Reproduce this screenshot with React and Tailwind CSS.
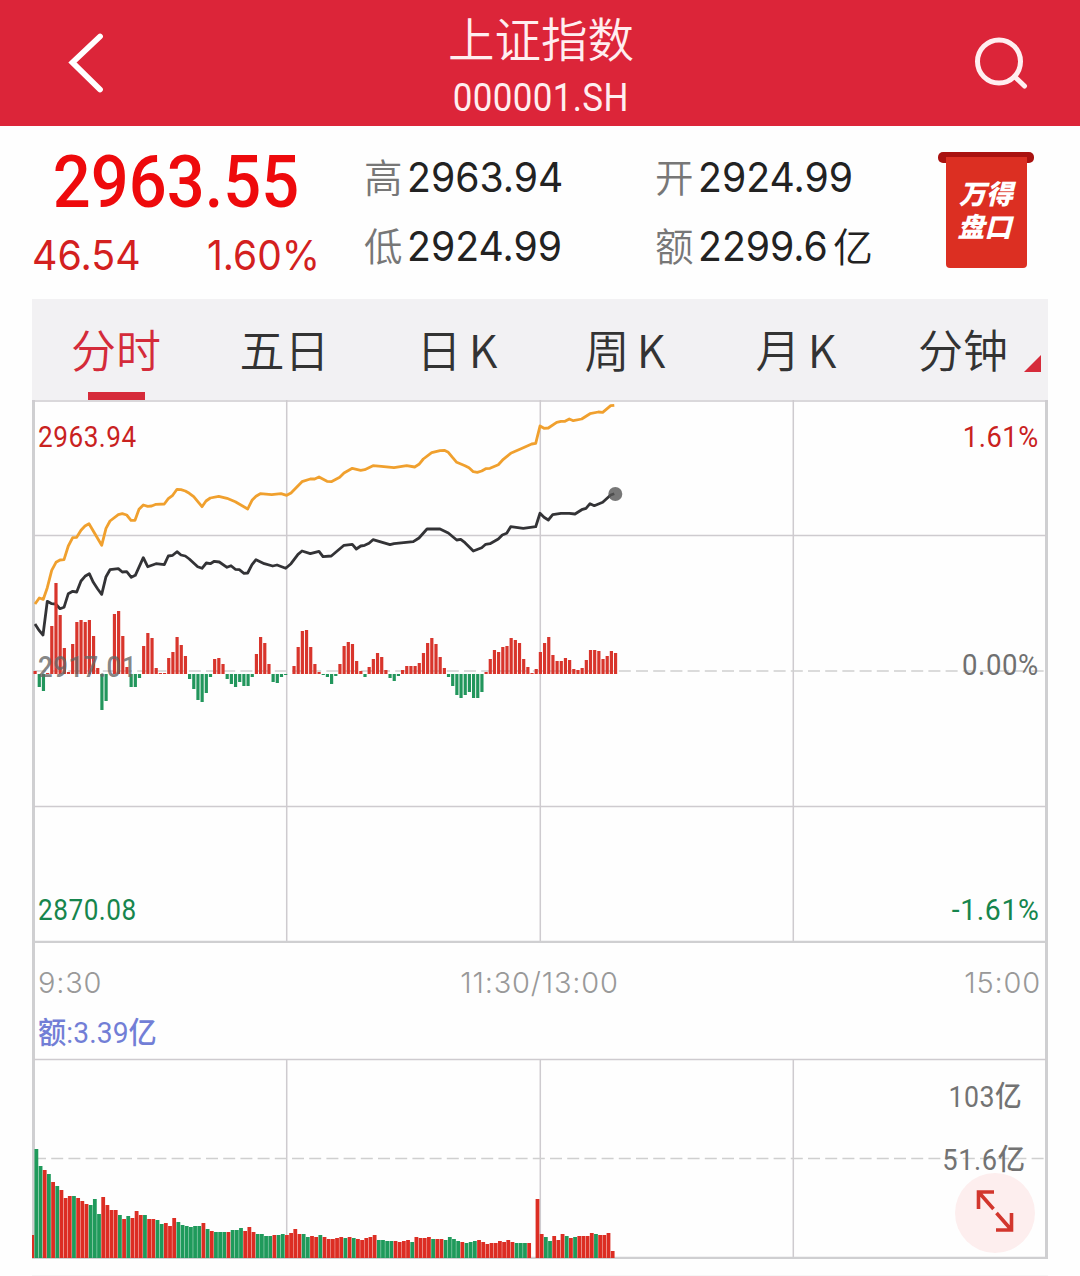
import React from 'react';

const STEP = 4.176;

// offsets from the zero line, one per minute
const momentum = [
  3, -13, -17, 1, 48, 91, 59, 26, 2, 30, 52, 54, 52, 54, 38, 6, -36, -27, 0, 60,
  63, 38, 7, -13, -13, -4, 28, 41, 36, 6, 1, 1, 16, 22, 37, 29, 18, -5, -15, -26,
  -28, -19, -3, 15, 16, 10, -5, -10, -13, -8, -12, -12, -3, 20, 37, 31, 10, -8, -9, -3,
  -1, 0, 8, 27, 43, 44, 27, 10, 2, -1, -3, -10, -2, 10, 28, 32, 30, 13, 3, -3,
  7, 15, 21, 17, 4, -4, -7, -2, 4, 8, 8, 8, 11, 21, 31, 36, 30, 17, 6, -3,
  -12, -21, -24, -21, -18, -24, -24, -18, 2, 15, 24, 22, 27, 28, 36, 34, 31, 15, 7, 1,
  5, 22, 31, 37, 19, 13, 13, 16, 14, 5, 4, 6, 14, 24, 24, 23, 15, 18, 23, 21,
];

const volume = [
  23, 109, 92, 88, 84, 76, 72, 68, 60, 62, 62, 60, 57, 54, 53, 59, 44, 61, 53, 48,
  48, 43, 39, 42, 40, 47, 43, 43, 39, 39, 38, 34, 35, 32, 40, 36, 33, 32, 31, 32,
  32, 35, 29, 27, 26, 26, 26, 26, 28, 28, 30, 27, 31, 26, 24, 24, 22, 22, 23, 23,
  24, 23, 25, 29, 24, 24, 21, 22, 21, 23, 21, 19, 19, 20, 21, 20, 21, 20, 19, 18,
  20, 21, 23, 18, 18, 17, 17, 17, 16, 17, 18, 16, 21, 20, 20, 21, 19, 19, 19, 18,
  21, 19, 17, 16, 15, 16, 17, 18, 16, 14, 15, 15, 17, 16, 18, 16, 15, 15, 15, 15,
  0, 59, 24, 21, 17, 22, 18, 24, 22, 20, 21, 22, 22, 22, 25, 24, 23, 23, 25, 7,
];

// r = rising minute, g = falling minute
const volumeSide =
  'rggrgrgrrrgrrrgggrrr' +
  'rgrgrrrgrrggrrrggggg' +
  'grgrgggrgggrrrggggrg' +
  'grrrrggrrgrrrrrgrgrr' +
  'rrrggggrrrrgrrrrgrrg' +
  'gggrgggrrrrrrrrrgggr' +
  'rrrggrrrgrgrrrrgrrrr';

const averageLine =
  '3,204 7.3,198 11.3,199.3 15.3,187.7 19.7,170.3 24,162.3 28,160 32,159.7 36.3,146 40.7,137.7 44.7,137.3 49,130.3 53,126 57,123.7 69.7,145.3 74,128.3 78,121 86.3,114.7 90.3,113.7 94.7,115 99,120.3 103,120.3 107,109.3 111.3,105 115.7,106.3 119.7,106 124,104.3 132.3,104 136.3,98.7 140.7,95.3 145,89.3 149,89.7 153.3,91 157.3,93.3 161.7,96.7 170,106.7 174,101 178.3,98 186.7,96.3 195,98.3 203.3,101.7 215.7,109 220,100.3 224,96.3 228.3,93.7 239.7,94.7 249,93.7 254.7,95.3 259,93 270,81.7 278.3,79 282.7,79 287,77 295,81.3 299.3,81.7 307.7,77.3 312,73 320.3,68.3 328.7,70.3 332.7,69.7 341,65.7 349.3,66.3 362,67.7 374.7,65.7 382.7,67 387,64.3 391.3,59 399.7,52.7 408,50.7 412.3,50.3 416.3,52.3 420.7,57.7 424.7,62.3 433,65.7 437,67.7 441.3,71.7 445.3,72.3 449.7,71 453.7,68.7 458,68.3 466.3,64.7 471.3,59.3 478.7,53.3 491.3,47.7 499.7,44 503.7,43.3 508,26 512,28.3 516.3,28 524.7,22.3 529,21.3 533,21.3 537.3,19 541.3,20.7 549.7,19 558,13.7 566.3,12 570.7,12.3 578.7,5.7 582.3,5.3';

const priceLine =
  '3,224 7.3,230.7 11,235 15.3,201.3 19.7,203.7 23.7,204 28,208.7 32,207.3 36.3,193.7 40.7,191.3 44.7,192 49,181 53,176.3 57.3,173.7 61.3,182.3 65.7,189 69.7,194.3 74,176.7 78,169.7 86.3,168.7 90.3,172 94.7,171.7 99.3,177.3 103.3,175.3 111.3,157.7 115.7,166.7 124,163.7 132.3,164.7 136.3,156 140.7,155.3 145,151.7 149,155 153.3,156 157.3,159 165.7,166.7 170,168.3 174.3,163 178.3,163.7 182.3,161.3 187.3,162 195,167.3 199,165.7 203.3,169.3 207.3,169.7 212,173.3 215.7,173 220,164.7 224,159.7 232.3,163.7 240.7,166 245,165 253.7,168.3 259,163.7 266,154.3 270,151 278.3,153.7 287,151.3 291,156.7 299.3,156 312,145.3 320.3,144.3 324.3,149 328.7,146 332.7,145.3 337,143.3 341,139.7 358,144.7 362,143.7 381.3,141.7 387,138 395,129 408,129 416.3,133 424.7,140 428.7,139.3 433,142.7 441.3,151 449.7,147.7 453.7,144.3 458,143.7 466.3,139 470.3,135 474.7,133.3 478.7,126.7 491.3,128.3 503.7,126.7 508,113.3 512,117.3 516.3,120 520.7,114.7 529,113.3 537.3,113.3 543,114 549.7,109.7 554,108.3 558,103.7 562.3,105.7 570.7,102.3 578.7,95 582.3,93.7';

const tabs = [
  { label: '分时', width: 'w-[168px]', active: true },
  { label: '五日', width: 'w-[169px]' },
  { label: '日 K', width: 'w-[176px]' },
  { label: '周 K', width: 'w-[160px]' },
  { label: '月 K', width: 'w-[182px]' },
  { label: '分钟', width: 'w-[152px]' },
];

const Header = () => (
  <header className="flex h-[126px] items-center justify-between bg-[#dc2539] pl-[68px] pr-[52px] text-[#ffeef0]">
    <svg className="h-[64px] w-[36px]" viewBox="0 0 36 64" fill="none" stroke="white" strokeWidth="5.8" strokeLinecap="round">
      <path d="M32 5.5L4.5 31.5L32 58.5" />
    </svg>
    <div className="flex flex-col items-center pl-[4px]">
      <h1 className="h-[73px] text-[46.5px] leading-[73px] font-[350]">上证指数</h1>
      <p className="h-[53px] scale-x-[0.92] font-['Roboto'] text-[38px] leading-[51px] tracking-[0.4px]">000001.SH</p>
    </div>
    <svg className="h-[54px] w-[54px]" viewBox="0 0 54 54" fill="none" stroke="currentColor" strokeWidth="5" strokeLinecap="round">
      <circle cx="25" cy="25.5" r="21.5" />
      <path d="M40.5 40.5L50.5 50" />
    </svg>
  </header>
);

const Stat = ({ label, value, unit }) => (
  <div className="flex h-[69px] items-center whitespace-nowrap text-[#222]">
    <span className="w-[43px] pb-[4px] text-[38.5px] font-[350] text-[#777]">{label}</span>
    <span className="w-[156px] origin-left scale-x-[0.955] font-['Inter'] text-[41px]">{value}</span>
    {unit && <span className="-ml-[21px] pb-[4px] text-[40px] font-[350]">{unit}</span>}
  </div>
);

const Quote = () => (
  <section className="flex h-[173px] pl-[32px]">
    <div className="w-[332px]">
      <div className="h-[101px] w-[288px] scale-x-[0.915] text-center font-['Roboto'] text-[73px] leading-[113px] font-medium text-[#ee0a0c]">
        2963.55
      </div>
      <div className="flex w-[288px] justify-between font-['Inter'] text-[41px] leading-[57px] text-[#d3201f]">
        <span className="origin-left scale-x-[0.96]">46.54</span>
        <span className="origin-right scale-x-[0.95]">1.60%</span>
      </div>
    </div>
    <div className="w-[291px] pt-[17px]">
      <Stat label="高" value="2963.94" />
      <Stat label="低" value="2924.99" />
    </div>
    <div className="w-[283px] pt-[17px]">
      <Stat label="开" value="2924.99" />
      <Stat label="额" value="2299.6" unit="亿" />
    </div>
    <div className="flex flex-col items-center pt-[26px]">
      <div className="h-[11px] w-[96px] rounded-[5px] bg-[#a91210]" />
      <div className="-mt-[6px] h-[111px] w-[81px] rounded-b-[4px] bg-[#dc2f22] pt-[19px] text-center text-[27px] leading-[33px] font-black text-white italic">
        <p>万得</p>
        <p className="-ml-[3px]">盘口</p>
      </div>
    </div>
  </section>
);

const Tabs = () => (
  <nav className="mx-[32px] flex h-[101px] bg-[#f2f1f3] text-[45px] font-[350] text-[#333]">
    {tabs.map((tab) => (
      <div key={tab.label} className={`flex shrink-0 flex-col items-center ${tab.width} ${tab.active ? 'text-[#d42b3a]' : ''}`}>
        <span className="h-[93px] leading-[99px] whitespace-nowrap [word-spacing:-3px]">{tab.label}</span>
        {tab.active && <span className="h-[8px] w-[57px] shrink-0 bg-[#d62b3a]" />}
      </div>
    ))}
    <svg className="mt-[56px] -ml-[15px] h-[17px] w-[17px] shrink-0" viewBox="0 0 17 17">
      <path d="M17 0V17H0Z" fill="#d62b3a" />
    </svg>
  </nav>
);

const PriceChart = () => (
  <div className="relative h-[543px] font-['Roboto'] text-[29px] leading-[36px] font-[450] tracking-[0.6px]">
    <svg className="block h-[543px] w-[1016px]" viewBox="0 0 1016 543" fill="none">
      <path d="M0 1H1016M2 135.5H1014M2 406.5H1014" stroke="#cecbcf" strokeWidth="1.5" />
      <path d="M254.7 0V542M508.3 0V542M761.3 0V542" stroke="#cecbcf" strokeWidth="1.5" />
      <path d="M2 271H1014" stroke="#cfcfcf" strokeWidth="1.5" strokeDasharray="12 5.2" />
      <path d="M2 542H1014" stroke="#cfcfd1" strokeWidth="2.5" />
      <polyline points={averageLine} stroke="#f0a02e" strokeWidth="2.8" strokeLinejoin="round" />
      <polyline points={priceLine} stroke="#333336" strokeWidth="2.8" strokeLinejoin="round" />
      {momentum.map((v, i) => (
        <rect
          key={i}
          x={1.5 + i * STEP}
          y={v > 0 ? 274 - v : 274}
          width="3.2"
          height={Math.abs(v)}
          fill={v > 0 ? '#d8352c' : '#22965c'}
        />
      ))}
      <circle cx="583.3" cy="94" r="7" fill="#555" fillOpacity="0.8" />
    </svg>
    <div className="absolute inset-0 flex justify-between pr-[9px] pl-[6px]">
      <div className="flex flex-col">
        <span className="mt-[19px] origin-left scale-x-[0.9] text-[#c9221f]">2963.94</span>
        <span className="mt-[194px] origin-left scale-x-[0.89] font-medium text-[#666]/80">2917.01</span>
        <span className="mt-[207px] origin-left scale-x-[0.9] text-[#16854d]">2870.08</span>
      </div>
      <div className="flex flex-col items-end">
        <span className="mt-[19px] origin-right scale-x-[0.94] text-[#c9221f]">1.61%</span>
        <span className="mt-[192px] origin-right scale-x-[0.95] font-normal text-[#707070]">0.00%</span>
        <span className="mt-[209px] origin-right scale-x-[0.98] text-[#16854d]">-1.61%</span>
      </div>
    </div>
  </div>
);

const TimeAxis = () => (
  <div className="h-[115px] pr-[7px] pl-[6px]">
    <div className="grid h-[63px] grid-cols-[1fr_auto_1fr] pt-[19px] font-['Inter'] text-[29px] leading-[42px] font-[350] tracking-[0.8px] text-[#999]">
      <span>9:30</span>
      <span>11:30/13:00</span>
      <span className="text-right">15:00</span>
    </div>
    <div className="origin-left scale-x-[0.94] font-['Roboto','Noto_Sans_CJK_SC'] text-[30px] leading-[54px] font-[450] tracking-[0.1px] text-[#727ed6]">额:3.39亿</div>
  </div>
);

const VolumeChart = () => (
  <div className="relative h-[201px] font-['Roboto','Noto_Sans_CJK_SC'] text-[29px] leading-[36px] tracking-[0.6px] text-[#737373]">
    <svg className="block h-[201px] w-[1016px]" viewBox="0 0 1016 201" fill="none">
      <path d="M2 1.5H1014M254.7 1V199M508.3 1V199M761.3 1V199" stroke="#cecbcf" strokeWidth="1.5" />
      <path d="M2 100.5H1014" stroke="#cfcfcf" strokeWidth="1.5" strokeDasharray="12 5.2" />
      <path d="M2 200H1014" stroke="#cfcfd1" strokeWidth="2.5" />
      {volume.map((v, i) => (
        <rect
          key={i}
          x={-1.7 + i * STEP}
          y={200 - v}
          width="3.8"
          height={v}
          fill={volumeSide[i] === 'r' ? '#dc2d23' : '#1f9a5b'}
        />
      ))}
    </svg>
    <div className="absolute top-0 right-[22px] flex flex-col items-end font-[450]">
      <span className="mt-[21px] mr-[4px] origin-right scale-x-[0.92]">103亿</span>
      <span className="mt-[27px] origin-right scale-x-[0.94]">51.6亿</span>
    </div>
    <button className="absolute top-[115px] right-[13px] flex h-[80px] w-[80px] items-center justify-center rounded-full bg-[#fdeeee]">
      <svg className="mb-[4px] h-[44px] w-[38px]" viewBox="0 0 38 44" fill="none" stroke="#d2362d" strokeWidth="3.6">
        <path d="M2.5 20V3H18M3 3.5L17.5 20" />
        <path d="M35.5 24V41H20M35 40.5L20.5 24" />
      </svg>
    </button>
  </div>
);

export default function App() {
  return (
    <div className="h-[1276px] w-[1080px] overflow-hidden bg-[#fefefe] font-['Noto_Sans_CJK_SC',sans-serif]">
      <Header />
      <Quote />
      <Tabs />
      <main className="mx-[32px] h-[859px] shadow-[inset_3px_0_0_#cfcfd1,inset_-3px_0_0_#cfcfd1]">
        <PriceChart />
        <TimeAxis />
        <VolumeChart />
      </main>
      <div className="mx-[32px] mt-[16px] h-px bg-[#f6f6f6]" />
    </div>
  );
}
